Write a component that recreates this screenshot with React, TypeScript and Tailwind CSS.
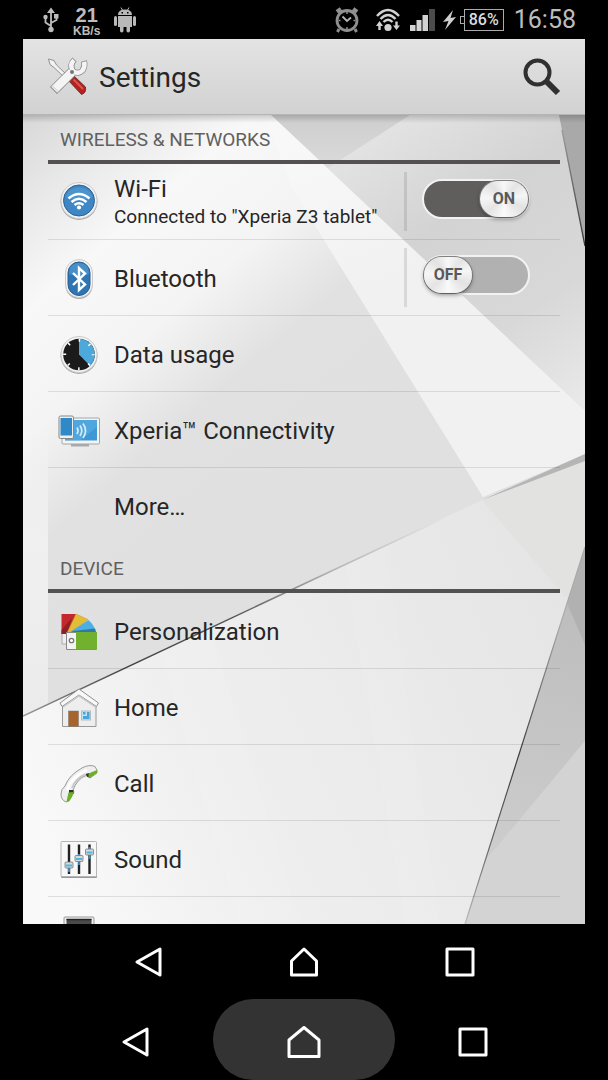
import React, { useState } from 'react';

const Wallpaper = () => (
  <svg className="absolute inset-0 w-full h-full" viewBox="23 115 562 809" preserveAspectRatio="none" aria-hidden="true">
    <defs>
      <linearGradient id="base" gradientUnits="userSpaceOnUse" x1="20" y1="110" x2="330" y2="472">
        <stop offset="0" stopColor="#d6d6d6" />
        <stop offset="0.16" stopColor="#e8e8e8" />
        <stop offset="0.33" stopColor="#f8f8f8" />
        <stop offset="0.53" stopColor="#f4f4f4" />
        <stop offset="0.72" stopColor="#e1e1e1" />
        <stop offset="1" stopColor="#e0e0e0" />
      </linearGradient>
      <linearGradient id="corner" gradientUnits="userSpaceOnUse" x1="390" y1="115" x2="580" y2="400">
        <stop offset="0" stopColor="#e4e4e4" />
        <stop offset="0.35" stopColor="#d3d3d3" />
        <stop offset="0.7" stopColor="#d8d8d8" />
        <stop offset="1" stopColor="#e8e8e8" />
      </linearGradient>
      <linearGradient id="roof" gradientUnits="userSpaceOnUse" x1="330" y1="115" x2="330" y2="170">
        <stop offset="0" stopColor="#cecece" />
        <stop offset="1" stopColor="#dbdbdb" />
      </linearGradient>
      <linearGradient id="beam" gradientUnits="userSpaceOnUse" x1="290" y1="150" x2="350" y2="300">
        <stop offset="0" stopColor="#f8f8f8" />
        <stop offset="1" stopColor="#f1f1f1" />
      </linearGradient>
      <linearGradient id="gutter" x1="0" y1="0" x2="0" y2="1">
        <stop offset="0" stopColor="#f6f6f6" stopOpacity="0" />
        <stop offset="0.4" stopColor="#f0f0f0" />
        <stop offset="1" stopColor="#ebebeb" />
      </linearGradient>
      <linearGradient id="floor" gradientUnits="userSpaceOnUse" x1="23" y1="800" x2="560" y2="560">
        <stop offset="0" stopColor="#f9f9f9" />
        <stop offset="0.3" stopColor="#efefef" />
        <stop offset="1" stopColor="#e5e5e5" />
      </linearGradient>
      <linearGradient id="shade" gradientUnits="userSpaceOnUse" x1="560" y1="600" x2="500" y2="860">
        <stop offset="0" stopColor="#bdbdbd" />
        <stop offset="1" stopColor="#cdcdcd" />
      </linearGradient>
      <linearGradient id="crease" gradientUnits="userSpaceOnUse" x1="23" y1="716" x2="440" y2="522">
        <stop offset="0" stopColor="#999" />
        <stop offset="0.25" stopColor="#444" />
        <stop offset="0.5" stopColor="#555" />
        <stop offset="0.75" stopColor="#b5b5b5" />
        <stop offset="1" stopColor="#e3e3e3" />
      </linearGradient>
      <linearGradient id="fold" gradientUnits="userSpaceOnUse" x1="585" y1="547" x2="465" y2="924">
        <stop offset="0.2" stopColor="#aaa" />
        <stop offset="0.55" stopColor="#3a3a3a" />
        <stop offset="0.8" stopColor="#666" />
        <stop offset="1" stopColor="#bbb" />
      </linearGradient>
      <linearGradient id="edge" gradientUnits="userSpaceOnUse" x1="562" y1="130" x2="585" y2="246">
        <stop offset="0" stopColor="#999" />
        <stop offset="1" stopColor="#333" />
      </linearGradient>
      <linearGradient id="topShadow" x1="0" y1="0" x2="0" y2="1">
        <stop offset="0" stopColor="#000" stopOpacity="0.18" />
        <stop offset="1" stopColor="#000" stopOpacity="0" />
      </linearGradient>
    </defs>
    <rect x="23" y="115" width="562" height="809" fill="url(#base)" />
    <path d="M271 115H585V454L483 497Z" fill="url(#corner)" />
    <path d="M271 115H410L328 168Z" fill="url(#roof)" />
    <path d="M271 115L585 411V454L483 497L293 190L265 115Z" fill="url(#beam)" />
    <path d="M559 115H585V246Z" fill="#a9a9a9" />
    <path d="M562 130L585 246" stroke="url(#edge)" strokeWidth="1.3" />
    <path d="M23 420H48V705L23 716Z" fill="url(#gutter)" />
    <path d="M23 716L482 500L585 457V924H23Z" fill="url(#floor)" />
    <path d="M482 500L585 457V547L568 600Z" fill="#e2e2e1" />
    <path d="M345 566L405 924H440L385 545Z" fill="#fff" opacity="0.06" />
    <path d="M160 652L240 924H300L210 628Z" fill="#fff" opacity="0.08" />
    <path d="M482 500L585 454V461Z" fill="#b5b5b5" />
    <path d="M23 716L440 520" stroke="url(#crease)" strokeWidth="1.5" />
    <path d="M585 547V924H465Z" fill="url(#shade)" />
    <path d="M585 547V645L567 603Z" fill="#b1b1b1" />
    <path d="M585 741L485 861L465 924H585Z" fill="#d3d3d3" />
    <path d="M585 547L465 924" stroke="url(#fold)" strokeWidth="1.2" />
    <rect x="23" y="115" width="562" height="8" fill="url(#topShadow)" />
  </svg>
);

const WifiIcon = () => (
  <svg width="42" height="42" viewBox="0 2 42 42">
    <circle cx="21" cy="21.500" r="18.500" fill="#aaa" />
    <circle cx="21" cy="20.500" r="18" fill="#f2f2f2" stroke="#ccc" strokeWidth="1" />
    <circle cx="21" cy="20.500" r="15.500" fill="#3f87c4" stroke="#2d6192" strokeWidth="1" />
    <path d="M7 17A15 15 0 0 1 35 17Q21 23 7 17Z" fill="#559dd6" opacity="0.6" />
    <g fill="none" stroke="#fff" strokeWidth="2.600">
      <path d="M10.500 18.500Q21 9.500 31.500 18.500" />
      <path d="M13.500 22Q21 15.500 28.500 22" />
      <path d="M16.500 25Q21 21.500 25.500 25" />
    </g>
    <circle cx="21" cy="27.500" r="2.100" fill="#fff" />
  </svg>
);

const BluetoothIcon = () => (
  <svg width="42" height="42" viewBox="0 0 42 42">
    <rect x="7.500" y="2" width="27" height="39" rx="13.500" fill="#aaa" />
    <rect x="7.500" y="1.500" width="27" height="38" rx="13.500" fill="#f4f4f4" stroke="#ccc" />
    <rect x="10" y="4" width="22" height="33.500" rx="11" fill="#2f75b3" stroke="#275f93" />
    <path d="M11 16Q11 5 21 5T31 16Q22 20 11 16Z" fill="#5aa0d6" opacity="0.6" />
    <path d="M15 15L27 26.500L21 32V10L27 15.500L15 27" fill="none" stroke="#fff" strokeWidth="2.400" />
  </svg>
);

const DataIcon = () => (
  <svg width="42" height="42" viewBox="0 0 42 42">
    <circle cx="21" cy="21.500" r="18.500" fill="#aaa" />
    <circle cx="21" cy="20.500" r="18" fill="#f4f4f4" stroke="#ccc" />
    <circle cx="21" cy="20.500" r="15.800" fill="#1b1b1b" />
    <path d="M21 20.500V4.700A15.800 15.800 0 0 1 32 31.800Z" fill="#4da9dc" />
    <circle cx="21" cy="20.500" r="14.300" fill="none" stroke="#fff" strokeWidth="3" strokeDasharray="1.500 9.730" strokeDashoffset="0.750" />
  </svg>
);

const ConnectivityIcon = () => (
  <svg width="42" height="42" viewBox="0 0 42 42">
    <path d="M13 33H31V36.500H13Z" fill="#aaa" />
    <rect x="4" y="8" width="37.500" height="26" rx="1" fill="#f4f4f4" stroke="#a5a5a5" />
    <rect x="7" y="10" width="32" height="20.500" fill="#3e98d4" />
    <path d="M7 10H39V17L22 30.500H7Z" fill="#62b5e6" opacity="0.5" />
    <g fill="none" stroke="#d5ecf8" strokeWidth="1.700">
      <path d="M19 17.500Q21 20.500 19 24" />
      <path d="M22 15.500Q25.500 20.500 22 26" />
      <path d="M25 13.500Q30 20.500 25 28" />
    </g>
    <rect x="1" y="6" width="14.500" height="22.500" rx="1.500" fill="#eee" stroke="#888" />
    <rect x="2.500" y="8" width="11.500" height="17.500" fill="#2f89c6" />
  </svg>
);

const PersonalizationIcon = () => (
  <svg width="42" height="42" viewBox="0 0 42 42">
    <path d="M4 22H12V33H4Z" fill="#eee" stroke="#aaa" />
    <path d="M3.500 3H18L11 23H3.500Z" fill="#c4282e" />
    <path d="M3.500 19L14 7L9 23H3.500Z" fill="#8e1f24" />
    <path d="M18 3L30 8.500L13 21L9 22Z" fill="#e3bd36" stroke="#c69d22" strokeWidth="0.500" />
    <path d="M30.500 9Q36 14 38 21H12Z" fill="#4daee0" />
    <path d="M15 20L37 17.500L38 21.500H13Z" fill="#2f78ad" />
    <path d="M8.500 21.500H38.500V38.500H8.500Z" fill="#f3f3f3" stroke="#888" />
    <path d="M18 21H39V38H18Z" fill="#72b12e" />
    <circle cx="13.500" cy="29.500" r="2.200" fill="#fff" stroke="#777" strokeWidth="1.300" />
  </svg>
);

const HouseIcon = () => (
  <svg width="42" height="42" viewBox="0 0 42 42">
    <path d="M4.500 17L21 5L38 17V39.500H4.500Z" fill="#eee" stroke="#999" />
    <path d="M21 2L40.500 16L38.500 19.500L21 8L4 19.500L2 16Z" fill="#f8f8f8" stroke="#909090" />
    <path d="M5 20L21 9L37.500 20" fill="none" stroke="#c8c8c8" strokeWidth="1.500" />
    <rect x="10.500" y="24" width="10" height="15.500" fill="#a7652b" stroke="#777" strokeWidth="0.500" />
    <rect x="23.500" y="24" width="9" height="9" fill="#bfe1f2" stroke="#bbb" />
    <path d="M25 25H27.500V27.500H25ZM29 25H31.500V32H29ZM25 29H29V32H25Z" fill="#45a6dc" />
  </svg>
);

const CallIcon = () => (
  <svg width="42" height="42" viewBox="0 0 42 42">
    <path d="M3 31Q3 26 7 23Q11 12 24 5Q31 1 37 3.500L39 7V10L32 15L28 12.500Q19 16 15 27L16 29L11 38L8 39Q3 37 3 31Z" fill="#efefef" stroke="#999" />
    <path d="M9 27Q13 14 29 7" fill="none" stroke="#fff" strokeWidth="3" />
    <path d="M14 25Q18 15 27 11.500" fill="none" stroke="#c4c4c4" strokeWidth="1.600" />
    <path d="M27.500 11L31 10L32.500 14.500L29.500 14Z" fill="#333" />
    <path d="M30.500 10.500L39 7V10L32.500 14.500L30.500 14Z" fill="#6cb02a" />
    <path d="M11 27L15.500 27V31L11 30Z" fill="#333" />
    <path d="M10.500 29.500L15.500 29L14 34L11 38L8.500 38.500Z" fill="#6cb02a" />
  </svg>
);

const SoundIcon = () => (
  <svg width="42" height="42" viewBox="0 0 42 42">
    <rect x="3" y="3" width="36" height="36" rx="1" fill="#999" />
    <rect x="3" y="2.500" width="35.500" height="35" rx="1" fill="#f8f8f8" stroke="#b5b5b5" />
    <path d="M11 5.500V35M21 5.500V35M31.500 5.500V35" stroke="#222" strokeWidth="2.400" />
    <path d="M11 28V33M21 15V26M31.500 8V20" stroke="#3c88bd" strokeWidth="2" />
    <g fill="#d5dade" stroke="#777" strokeWidth="0.800">
      <rect x="7" y="23" width="8" height="6" rx="1" />
      <rect x="17" y="16.500" width="8" height="6" rx="1" />
      <rect x="27.500" y="10" width="8" height="6" rx="1" />
    </g>
    <path d="M8 26.500H14M18 20H24M28.500 13.500H34.500" stroke="#55b3e2" strokeWidth="1.800" />
  </svg>
);

const DisplayIcon = () => (
  <svg width="42" height="42" viewBox="0 0 42 42">
    <rect x="6" y="2" width="30" height="38" rx="1" fill="#eee" stroke="#999" />
    <rect x="8.500" y="4" width="25" height="32" fill="#4a4a4a" />
    <path d="M8.500 4.500H33.500" stroke="#222" strokeWidth="1.500" />
  </svg>
);

const ToolsIcon = () => (
  <svg width="42" height="42" viewBox="0 0 42 42" aria-hidden="true">
    <path d="M1.500 3L7 4.500L9.500 9L20 19L17 21L7 11.500L3 8.500Z" fill="#f2f2f2" stroke="#888" strokeWidth="0.900" />
    <path d="M21 24L26 19L38.500 31Q39.500 37 34.500 38.500Z" fill="#b3221f" stroke="#642020" strokeWidth="0.800" />
    <path d="M26.500 23.500L36 33" stroke="#dd5850" strokeWidth="1.800" />
    <g fill="none" stroke="#8a8a8a">
      <path d="M6.500 34.500L25 16" strokeWidth="10" />
      <path d="M27.500 3.500Q22 9 26 15Q31 19 35.500 14.500Q38.500 10 37 5" strokeWidth="6" />
    </g>
    <g fill="none" stroke="#f4f4f4">
      <path d="M7.200 33.800L25 16" strokeWidth="8.500" />
      <path d="M27 4.200Q22 9 26 15Q31 19 35.500 14.500Q38.300 10 37.200 5.700" strokeWidth="4.500" />
    </g>
    <path d="M5.500 30L12 36.500" stroke="#c5c5c5" />
    <circle cx="25" cy="16" r="2" fill="#777" />
  </svg>
);

const UsbIcon = () => (
  <svg width="16" height="26" viewBox="0 0 16 26" fill="none" stroke="#bdbdbd" strokeWidth="1.800">
    <path d="M8 3V22M8 19L2.500 15.500V10M8 16L13.500 13V9" />
    <path d="M4 6L8 0.500L12 6Z" fill="#bdbdbd" stroke="none" />
    <circle cx="8" cy="22.500" r="2.700" fill="#bdbdbd" stroke="none" />
    <circle cx="2.500" cy="10" r="2.200" fill="#bdbdbd" stroke="none" />
    <path d="M11 7H15.500V11.500H11Z" fill="#bdbdbd" stroke="none" />
  </svg>
);

const AndroidIcon = () => (
  <svg width="22" height="26" viewBox="0 0 22 26" fill="#b8b8b8">
    <path d="M4 8Q4 2.500 11 2.500T18 8ZM4 9H18V20H4Z" />
    <path d="M7 0.500L9 4M15 0.500L13 4" stroke="#b8b8b8" />
    <rect y="9" width="3" height="10" rx="1.500" />
    <rect x="19" y="9" width="3" height="10" rx="1.500" />
    <rect x="6" y="18" width="3.500" height="7.500" rx="1.700" />
    <rect x="12.500" y="18" width="3.500" height="7.500" rx="1.700" />
    <path d="M7.500 5H9V6.500H7.500ZM13 5H14.500V6.500H13Z" fill="#000" />
  </svg>
);

const AlarmIcon = () => (
  <svg width="26" height="26" viewBox="0 0 26 26" fill="none" stroke="#8f8f8f">
    <circle cx="13" cy="13.500" r="10" strokeWidth="2.800" />
    <path d="M3 5L7 2M23 5L19 2" strokeWidth="4.500" />
    <path d="M5 22L3.500 25M21 22L22.500 25" strokeWidth="3" />
    <path d="M8.500 9.500L13 14L17 10.500" stroke="#b5b5b5" strokeWidth="1.800" />
    <path d="M13 5V7M13 20V22M4.500 13.500H6.500M19.500 13.500H21.500" strokeWidth="1.500" />
  </svg>
);

const WifiStatusIcon = () => (
  <svg width="24" height="24" viewBox="0 0 24 24" fill="none" stroke="#d2d2d2" strokeWidth="2.400">
    <path d="M1 8Q12 -4 23 8M4.500 11Q12 3 19.500 11M7.500 14Q12 9.500 16.500 14" />
    <circle cx="12" cy="19.500" r="3.600" fill="#d2d2d2" stroke="none" />
    <path d="M0 18L3.500 13L7 18H4.700V22H2.300V18ZM17 17.500H19.300V13.500H21.700V17.500H24L20.500 22Z" fill="#d2d2d2" stroke="none" />
  </svg>
);

const SignalIcon = () => (
  <svg width="25" height="22" viewBox="0 0 25 22" fill="#d2d2d2">
    <path d="M0 16H5.500V22H0ZM6.500 11H11.500V22H6.500ZM12.500 6H18V22H12.500Z" />
    <path d="M19 0H25V22H19Z" fill="#4b4b4b" />
  </svg>
);

const BoltIcon = () => (
  <svg width="13" height="20" viewBox="0 0 13 20">
    <path d="M10 0L0 12L5.500 11L2 20L13 7L7.500 8Z" fill="#cfcfcf" />
  </svg>
);

const StatusBar = () => (
  <div className="h-[39px] shrink-0 flex items-center justify-between pl-[43px] pr-8 text-[#bdbdbd]">
    <div className="flex items-center gap-3.5">
      <UsbIcon />
      <div className="flex flex-col items-center pt-0.5 font-['Liberation_Sans'] font-bold">
        <span className="text-xl leading-5">21</span>
        <span className="text-xs leading-3">KB/s</span>
      </div>
      <AndroidIcon />
    </div>
    <div className="flex items-center">
      <AlarmIcon />
      <div className="ml-4"><WifiStatusIcon /></div>
      <div className="ml-2.5"><SignalIcon /></div>
      <div className="ml-2 mr-1"><BoltIcon /></div>
      <div className="flex items-center">
        <span className="w-1 h-2 border border-r-0 border-[#aaa]" />
        <span className="h-[22px] w-10 border border-[#aaa] text-base leading-5 font-medium text-center text-[#ddd]">86%</span>
      </div>
      <span className="ml-2.5 text-[25px] leading-8">16:58</span>
    </div>
  </div>
);

interface ToggleProps {
  label: string;
  defaultOn: boolean;
}

const Toggle: React.FC<ToggleProps> = ({ label, defaultOn }) => {
  const [on, setOn] = useState(defaultOn);

  return (
    <label className="relative block w-[108px] h-10 mr-[30px] mb-1.5">
      <input
        type="checkbox"
        role="switch"
        aria-label={label}
        checked={on}
        onChange={() => setOn(!on)}
        className="block w-full h-full appearance-none rounded-full border-2 border-[#f2f2f2] bg-[#b1b1b1] checked:bg-[#5f5e5d]"
      />
      <span
        className={`absolute top-0.5 w-12 h-9 rounded-full flex items-center justify-center text-base font-bold text-[#5a5a5a] shadow-[0_2px_4px_#0006,0_0_0_1px_#888] bg-[conic-gradient(#f8f8f8,#e4e4e4_12%,#f6f6f6_22%,#e2e2e2_32%,#fafafa_50%,#e4e4e4_65%,#f6f6f6_76%,#e2e2e2_88%,#f8f8f8)] ${on ? 'right-0.5' : 'left-0.5'}`}
      >
        {on ? 'ON' : 'OFF'}
      </span>
    </label>
  );
};

interface RowProps {
  icon?: React.ReactNode;
  title: React.ReactNode;
  subtitle?: string;
  last?: boolean;
  toggle?: ToggleProps;
}

const Row: React.FC<RowProps> = ({ icon, title, subtitle, last, toggle }) => (
  <li className={`h-[76px] shrink-0 flex items-center border-b ${last ? 'border-transparent' : 'border-black/10'}`}>
    <button className="flex-1 h-full flex items-center gap-3.5 pl-2.5 pt-0.5 text-left">
      <span className="w-[42px] h-[42px] shrink-0">{icon}</span>
      <span className="flex flex-col">
        <span className={`text-2xl ${subtitle ? 'leading-7' : 'leading-8'}`}>{title}</span>
        {subtitle && <span className="text-[19px] leading-7">{subtitle}</span>}
      </span>
    </button>
    {toggle && (
      <>
        <span className="w-[3px] h-[59px] mr-[15px] bg-black/10" />
        <Toggle {...toggle} />
      </>
    )}
  </li>
);

const SectionTitle: React.FC<{ children: React.ReactNode }> = ({ children }) => (
  <h2 className="h-[49px] shrink-0 pl-3 border-b-4 border-[#545152] text-[19px] leading-[49px] text-[#606060]">{children}</h2>
);

const BackGlyph = () => (
  <svg width="30" height="32" viewBox="0 0 30 32" fill="none" stroke="#fff" strokeWidth="3" strokeLinejoin="round">
    <path d="M27 3V29L4 16Z" />
  </svg>
);

const HomeGlyph = () => (
  <svg width="34" height="34" viewBox="0 0 34 34" fill="none" stroke="#fff" strokeWidth="3" strokeLinejoin="round">
    <path d="M17 2.500L32 15V31.500H2V15Z" />
  </svg>
);

const HomeGlyphSmall = () => (
  <svg width="30" height="30" viewBox="0 0 30 30" fill="none" stroke="#fff" strokeWidth="3" strokeLinejoin="round">
    <path d="M15 2L27.500 14V28H2.500V14Z" />
  </svg>
);

const RecentsGlyph = () => (
  <svg width="30" height="30" viewBox="0 0 30 30" fill="none" stroke="#fff" strokeWidth="3" strokeLinejoin="round">
    <path d="M2 2H28V28H2Z" />
  </svg>
);

export default function App() {
  return (
    <div className="h-screen flex flex-col bg-black font-['Roboto',sans-serif] text-[#262626]">
      <StatusBar />

      <header className="h-[76px] shrink-0 mx-[23px] flex items-center pl-6 pr-6 bg-linear-to-b from-[#e3e3e3] to-[#d2d2d2] border-b border-[#b5b5b5]">
        <ToolsIcon />
        <h1 className="flex-1 pl-2.5 pt-0.5 text-[28px] leading-9">Settings</h1>
        <button aria-label="Search">
          <svg width="38" height="38" viewBox="0 0 38 38" fill="none" stroke="#303030">
            <circle cx="14.500" cy="14.500" r="12" strokeWidth="4" />
            <path d="M22.500 22.500L35 35" strokeWidth="6" />
          </svg>
        </button>
      </header>

      <main className="relative flex-1 min-h-0 mx-[23px] overflow-hidden">
        <Wallpaper />
        <div className="relative mx-[25px] flex flex-col">
          <SectionTitle>WIRELESS &amp; NETWORKS</SectionTitle>
          <ul className="flex flex-col">
            <Row icon={<WifiIcon />} title="Wi-Fi" subtitle={'Connected to "Xperia Z3 tablet"'} toggle={{ label: 'Wi-Fi', defaultOn: true }} />
            <Row icon={<BluetoothIcon />} title="Bluetooth" toggle={{ label: 'Bluetooth', defaultOn: false }} />
            <Row icon={<DataIcon />} title="Data usage" />
            <Row icon={<ConnectivityIcon />} title="Xperia™ Connectivity" />
            <Row title="More…" last />
          </ul>
          <SectionTitle>DEVICE</SectionTitle>
          <ul className="flex flex-col">
            <Row icon={<PersonalizationIcon />} title="Personalization" />
            <Row icon={<HouseIcon />} title="Home" />
            <Row icon={<CallIcon />} title="Call" />
            <Row icon={<SoundIcon />} title="Sound" />
            <Row icon={<DisplayIcon />} title="" />
          </ul>
        </div>
      </main>

      <nav className="h-[75px] shrink-0 px-[70px] grid grid-cols-3 place-items-center">
        <button aria-label="Back"><BackGlyph /></button>
        <button aria-label="Home"><HomeGlyphSmall /></button>
        <button aria-label="Recent apps"><RecentsGlyph /></button>
      </nav>

      <nav className="h-[81px] shrink-0 px-14 grid grid-cols-[157fr_181fr_157fr]">
        <button aria-label="Back" className="flex items-center justify-center pt-1"><BackGlyph /></button>
        <button aria-label="Home" className="flex items-center justify-center pt-1 rounded-full bg-[#333]"><HomeGlyph /></button>
        <button aria-label="Recent apps" className="flex items-center justify-center pt-1"><RecentsGlyph /></button>
      </nav>
    </div>
  );
}
